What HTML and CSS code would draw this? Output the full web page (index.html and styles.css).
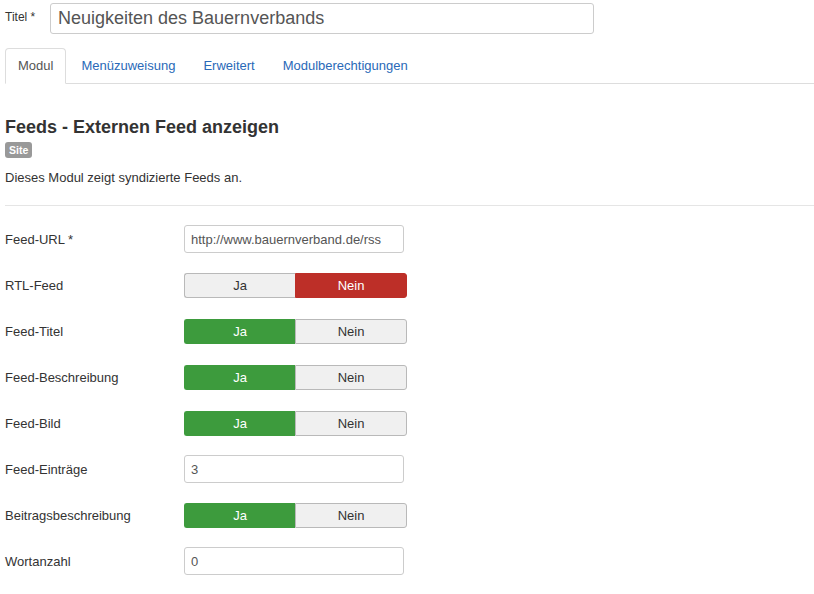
FILE: index.html
```html
<!DOCTYPE html>
<html lang="de">
<head>
<meta charset="utf-8">
<title>Modul</title>
<link rel="stylesheet" href="styles.css">
</head>
<body>
<div class="page">
  <div class="title-row">
    <label class="title-label">Titel *</label>
    <input class="title-input" type="text" value="Neuigkeiten des Bauernverbands">
  </div>
  <ul class="tabs">
    <li class="tab active"><a>Modul</a></li>
    <li class="tab"><a>Menüzuweisung</a></li>
    <li class="tab"><a>Erweitert</a></li>
    <li class="tab"><a>Modulberechtigungen</a></li>
  </ul>
  <h3 class="heading">Feeds - Externen Feed anzeigen</h3>
  <span class="badge">Site</span>
  <p class="desc">Dieses Modul zeigt syndizierte Feeds an.</p>
  <hr class="sep">
  <div class="form">
    <div class="row"><label>Feed-URL *</label><input class="text" type="text" value="http://www.bauernverband.de/rss"></div>
    <div class="row"><label>RTL-Feed</label><div class="toggle"><span class="opt">Ja</span><span class="opt no-on">Nein</span></div></div>
    <div class="row"><label>Feed-Titel</label><div class="toggle"><span class="opt yes-on">Ja</span><span class="opt">Nein</span></div></div>
    <div class="row"><label>Feed-Beschreibung</label><div class="toggle"><span class="opt yes-on">Ja</span><span class="opt">Nein</span></div></div>
    <div class="row"><label>Feed-Bild</label><div class="toggle"><span class="opt yes-on">Ja</span><span class="opt">Nein</span></div></div>
    <div class="row"><label>Feed-Einträge</label><input class="text" type="text" value="3"></div>
    <div class="row"><label>Beitragsbeschreibung</label><div class="toggle"><span class="opt yes-on">Ja</span><span class="opt">Nein</span></div></div>
    <div class="row"><label>Wortanzahl</label><input class="text" type="text" value="0"></div>
  </div>
</div>
</body>
</html>
```
FILE: styles.css
```css
html, body {
  margin: 0;
  padding: 0;
  background: #fff;
}
body {
  font-family: "Liberation Sans", Arial, Helvetica, sans-serif;
  font-size: 13px;
  color: #333;
}
.page {
  padding: 3px 0 0 5px;
}
.title-row {
  display: flex;
  align-items: center;
  height: 30px;
}
.title-label {
  width: 45px;
  font-size: 12px;
  margin-top: -2px;
  align-self: flex-start;
  padding-top: 9px;
}
.title-input {
  box-sizing: border-box;
  width: 544px;
  height: 31px;
  border: 1px solid #ccc;
  border-radius: 3px;
  padding: 0 7px;
  font-family: inherit;
  font-size: 18px;
  color: #555;
  margin: 0;
}
.tabs {
  list-style: none;
  margin: 15px 0 0 0;
  padding: 0;
  display: flex;
  border-bottom: 1px solid #ddd;
  height: 35px;
}
.tab {
  margin-right: 2px;
  margin-bottom: -1px;
}
.tab a {
  display: block;
  box-sizing: border-box;
  height: 36px;
  line-height: 34px;
  padding: 0 12px;
  border: 1px solid transparent;
  border-radius: 4px 4px 0 0;
  color: #2a69b8;
  font-size: 13px;
}
.tab.active a {
  color: #555;
  background: #fff;
  border-color: #ddd #ddd transparent;
}
.heading {
  margin: 32px 0 0 0;
  font-size: 18px;
  line-height: 22px;
  font-weight: bold;
  color: #333;
}
.badge {
  display: inline-block;
  margin-top: 4px;
  background: #999;
  color: #fff;
  font-size: 10.5px;
  font-weight: bold;
  line-height: 16px;
  height: 16px;
  padding: 0 4px;
  border-radius: 3px;
}
.desc {
  margin: 11px 0 0 0;
  line-height: 18px;
}
.sep {
  margin: 18px 0 10px 0;
  border: 0;
  border-top: 1px solid #e5e5e5;
}
.form {
  display: flex;
  flex-direction: column;
}
.row {
  display: grid;
  grid-template-columns: 179px auto;
  align-items: center;
  height: 46px;
  justify-items: start;
}
.row label {
  font-size: 13px;
  color: #333;
}
.text {
  box-sizing: border-box;
  width: 220px;
  height: 28px;
  margin: 0;
  border: 1px solid #ccc;
  border-radius: 3px;
  padding: 0 6px;
  font-family: inherit;
  font-size: 13px;
  color: #555;
}
.toggle {
  display: flex;
  width: 223px;
  height: 25px;
  box-sizing: border-box;
}
.opt {
  flex: 1;
  display: flex;
  align-items: center;
  justify-content: center;
  box-sizing: border-box;
  background: #f0f0f0;
  border: 1px solid #b9b9b9;
  color: #333;
  font-size: 13px;
}
.opt:first-child {
  border-radius: 3px 0 0 3px;
  border-right: 0;
}
.opt:last-child {
  border-radius: 0 3px 3px 0;
}
.opt.yes-on {
  background: #3d9b3d;
  border-color: #3d9b3d;
  color: #fff;
}
.opt.no-on {
  background: #bd2f28;
  border-color: #bd2f28;
  color: #fff;
}
```
